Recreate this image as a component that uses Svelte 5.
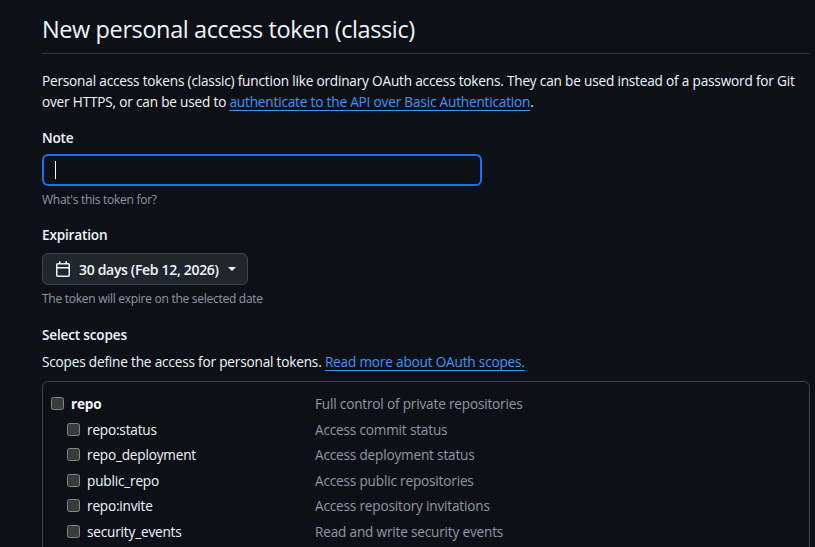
<script>
  const scopes = [
    { name: 'repo:status', desc: 'Access commit status' },
    { name: 'repo_deployment', desc: 'Access deployment status' },
    { name: 'public_repo', desc: 'Access public repositories' },
    { name: 'repo:invite', desc: 'Access repository invitations' },
    { name: 'security_events', desc: 'Read and write security events' }
  ];
</script>

<main class="page">
  <h1 class="title">New personal access token (classic)</h1>

  <p class="intro">
    Personal access tokens (classic) function like ordinary OAuth access tokens. They can be used instead of a password for Git over HTTPS, or can be used to <a href="#auth">authenticate to the API over Basic Authentication</a>.
  </p>

  <section class="field note-field">
    <div class="label">Note</div>
    <div class="input"><span class="caret"></span></div>
    <div class="hint">What's this token for?</div>
  </section>

  <section class="field expiry-field">
    <div class="label">Expiration</div>
    <button class="select" type="button">
      <svg class="calendar" viewBox="0 0 16 16" width="16" height="16" aria-hidden="true">
        <path fill="currentColor" d="M4.75 0a.75.75 0 0 1 .75.75V2h5V.75a.75.75 0 0 1 1.5 0V2h1.25c.966 0 1.75.784 1.75 1.75v10.5A1.75 1.75 0 0 1 13.25 16H2.75A1.75 1.75 0 0 1 1 14.25V3.75C1 2.784 1.784 2 2.75 2H4V.75A.75.75 0 0 1 4.75 0ZM2.5 7.5v6.75c0 .138.112.25.25.25h10.5a.25.25 0 0 0 .25-.25V7.5Zm10.75-4H2.75a.25.25 0 0 0-.25.25V6h11V3.75a.25.25 0 0 0-.25-.25Z"/>
      </svg>
      <span>30 days (Feb 12, 2026)</span>
      <span class="arrow"></span>
    </button>
    <div class="hint">The token will expire on the selected date</div>
  </section>

  <section class="field scopes-field">
    <div class="label">Select scopes</div>
    <p class="scopes-text">Scopes define the access for personal tokens. <a href="#scopes">Read more about OAuth scopes.</a></p>

    <div class="scope-box">
      <div class="row parent">
        <div class="name"><span class="check"></span><strong>repo</strong></div>
        <div class="desc">Full control of private repositories</div>
      </div>
      {#each scopes as scope}
        <div class="row child">
          <div class="name"><span class="check"></span>{scope.name}</div>
          <div class="desc">{scope.desc}</div>
        </div>
      {/each}
    </div>
  </section>
</main>

<style>
  :global(body) {
    background: #0d1117;
    overflow: hidden;
  }

  .page {
    box-sizing: border-box;
    width: 815px;
    height: 547px;
    overflow: hidden;
    padding: 13px 5px 0 42px;
    color: #f0f6fc;
    font-family: "Open Sans", "Noto Sans", sans-serif;
    font-size: 13.6px;
    letter-spacing: -0.18px;
  }

  .title {
    margin: 0;
    padding-bottom: 8px;
    border-bottom: 1px solid #30363d;
    font-size: 23.5px;
    font-weight: 400;
    letter-spacing: -0.4px;
    line-height: 32px;
  }

  .intro {
    margin: 16px 0 0;
    line-height: 21px;
  }

  a {
    color: #4493f8;
    text-decoration: underline;
    text-underline-offset: 3px;
  }

  .label {
    font-weight: 600;
    line-height: 20px;
  }

  .note-field {
    margin-top: 16px;
  }

  .input {
    box-sizing: border-box;
    display: flex;
    align-items: center;
    width: 440px;
    height: 32px;
    margin-top: 6px;
    padding-left: 11px;
    border: 2px solid #1f6feb;
    border-radius: 6px;
  }

  .caret {
    width: 1px;
    height: 18px;
    background: #f0f6fc;
  }

  .hint {
    margin-top: 5px;
    color: #9198a1;
    font-size: 12px;
    letter-spacing: -0.27px;
    line-height: 18px;
  }

  .expiry-field {
    margin-top: 16px;
  }

  .select {
    display: flex;
    align-items: center;
    box-sizing: border-box;
    width: 206px;
    height: 32px;
    margin-top: 8px;
    padding: 0 0 0 12px;
    background: #21262d;
    border: 1px solid #3d444d;
    border-radius: 6px;
    color: #f0f6fc;
    font: inherit;
    font-size: 14px;
    font-weight: 600;
    letter-spacing: -0.32px;
  }

  .calendar {
    margin-right: 8px;
    color: #f0f6fc;
  }

  .arrow {
    margin-left: 9px;
    border-top: 4px solid #f0f6fc;
    border-left: 4px solid transparent;
    border-right: 4px solid transparent;
  }

  .scopes-field {
    margin-top: 17px;
  }

  .scopes-text {
    margin: 6px 0 0;
    line-height: 21px;
  }

  .scope-box {
    margin-top: 9px;
    padding: 9px 0 30px 8px;
    border: 1px solid #3d444d;
    border-radius: 6px;
  }

  .row {
    display: grid;
    grid-template-columns: 264px 1fr;
    height: 25.5px;
    align-items: center;
  }

  .child .name {
    padding-left: 16px;
  }

  .name {
    display: flex;
    align-items: center;
  }

  .check {
    box-sizing: border-box;
    flex: none;
    width: 13px;
    height: 13px;
    margin-right: 7px;
    background: #3b3b3b;
    border: 1px solid #858585;
    border-radius: 2.5px;
  }

  .desc {
    color: #9198a1;
  }
</style>
